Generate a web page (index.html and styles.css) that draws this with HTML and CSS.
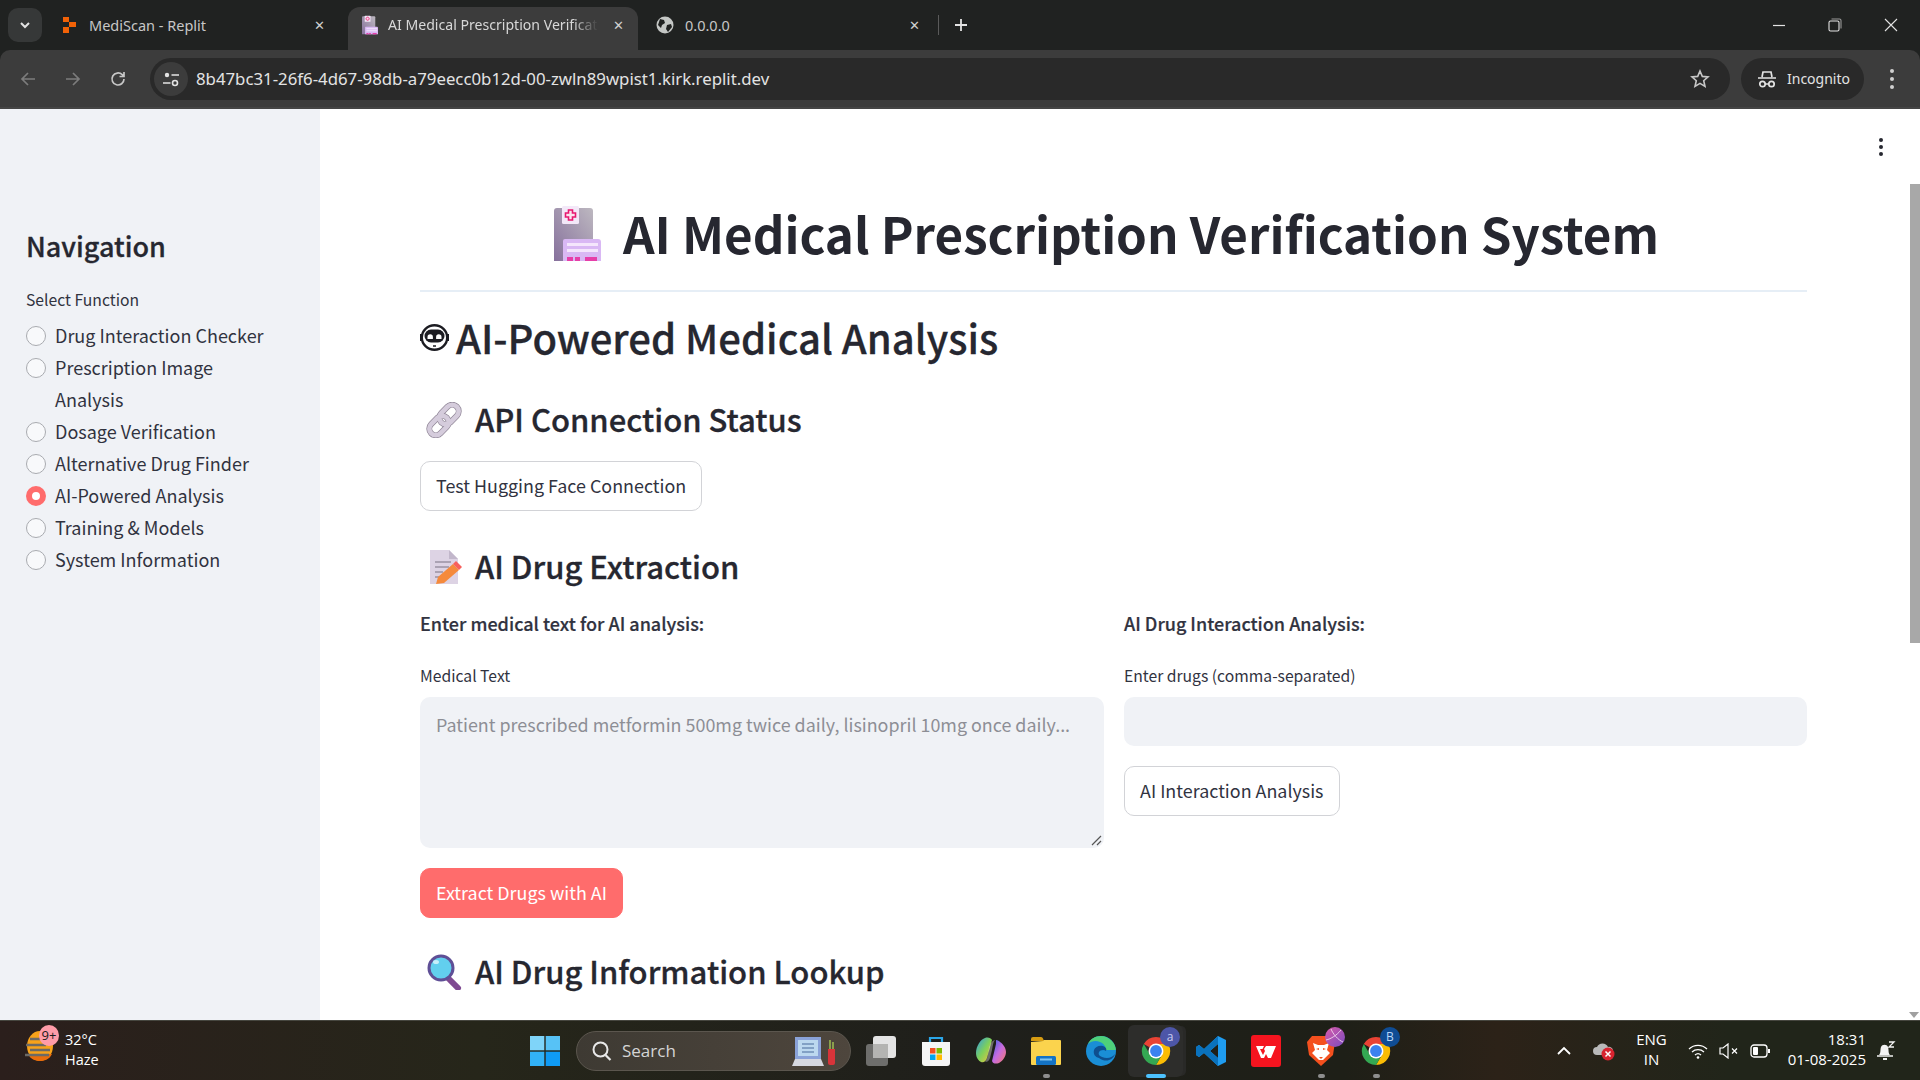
FILE: index.html
```html
<!DOCTYPE html>
<html lang="en">
<head>
    <meta charset="UTF-8">
    <title>AI Medical Prescription Verification System</title>
    <link rel="stylesheet" href="styles.css">
</head>
<body>

    <svg class="defs" width="0" height="0">
        <defs>
            <linearGradient id="building" x1="0" y1="1" x2="1" y2="0">
                <stop offset="0" stop-color="#86709c"/>
                <stop offset="1" stop-color="#bdb8c0"/>
            </linearGradient>
            <linearGradient id="copilot-left" x1="0" y1="0" x2="1" y2="1">
                <stop offset="0" stop-color="#2f9be8"/>
                <stop offset=".5" stop-color="#7ed05a"/>
                <stop offset="1" stop-color="#f8c33c"/>
            </linearGradient>
            <linearGradient id="copilot-right" x1="0" y1="0" x2="1" y2="1">
                <stop offset="0" stop-color="#3d5fe0"/>
                <stop offset=".5" stop-color="#c56be0"/>
                <stop offset="1" stop-color="#f77a6a"/>
            </linearGradient>
        </defs>
        <symbol id="chrome-logo" viewBox="0 0 32 32">
            <path d="M16 1a15 15 0 0 1 13 7.500H16a7.500 7.500 0 0 0-6.500 3.750L3 8.500A15 15 0 0 1 16 1z" fill="#ea4335"/>
            <path d="M29 8.500a15 15 0 0 1-13 22.500l6.500-11.250A7.500 7.500 0 0 0 22.500 12L16 8.500z" fill="#fbbc04"/>
            <path d="M3 8.500l6.500 11.250a7.500 7.500 0 0 0 13 0L16 31A15 15 0 0 1 3 8.500z" fill="#34a853"/>
            <circle cx="16" cy="16" r="8" fill="#fff"/>
            <circle cx="16" cy="16" r="6.300" fill="#3b82f0"/>
        </symbol>
        <symbol id="hospital" viewBox="0 0 47 55">
            <path d="M3 2h33a3 3 0 0 1 3 3v50H0V5a3 3 0 0 1 3-3z" fill="url(#building)"/>
            <rect x="8" y="0" width="17" height="18" rx="1.500" fill="#f3e8f8"/>
            <path d="M14.500 4h4v3h3v4h-3v3h-4v-3h-3V7h3z" fill="#fbe3ee" stroke="#e8186f" stroke-width="1.600"/>
            <path d="M11 33h33a3 3 0 0 1 3 3v19H9V35a2 2 0 0 1 2-2z" fill="#d9b8f4"/>
            <rect x="13" y="37" width="31" height="3" fill="#f4e6fc"/>
            <rect x="13" y="43" width="31" height="3" fill="#f4e6fc"/>
            <rect x="13" y="51" width="6" height="4" fill="#e63fa8"/>
            <rect x="21" y="51" width="5" height="4" fill="#e63fa8"/>
            <rect x="31" y="51" width="12" height="4" fill="#e63fa8"/>
        </symbol>
    </svg>

    <div class="tabstrip">
        <button class="tab-menu">
            <svg width="14" height="14" viewBox="0 0 14 14"><path d="M3 5l4 4 4-4" fill="none" stroke="#e3e3e3" stroke-width="2"/></svg>
        </button>
        <div class="tab">
            <svg class="favicon" width="16" height="18" viewBox="0 0 16 18"><path d="M1 1h6v5H1zM7 6h7v5H7zM1 11h6v6H1z" fill="#f26207"/></svg>
            <span class="tab-title">MediScan - Replit</span>
            <span class="tab-close">&#10005;</span>
        </div>
        <div class="tab tab-active">
            <svg class="favicon" width="16" height="20"><use href="#hospital"/></svg>
            <span class="tab-title">AI Medical Prescription Verificat</span>
            <span class="tab-close">&#10005;</span>
        </div>
        <div class="tab">
            <svg class="favicon" width="18" height="18" viewBox="0 0 18 18"><circle cx="9" cy="9" r="8.500" fill="#c4c7c5"/><path d="M4 3l4 1 1 3-3 2-1 3-3-3zM11 9l4-1 1 3-4 5-2-3z" fill="#202221"/></svg>
            <span class="tab-title">0.0.0.0</span>
            <span class="tab-close">&#10005;</span>
        </div>
        <span class="tab-divider"></span>
        <svg class="new-tab" width="14" height="14" viewBox="0 0 14 14"><path d="M7 1v12M1 7h12" stroke="#e3e3e3" stroke-width="1.800"/></svg>
        <div class="window-buttons">
            <svg width="14" height="14" viewBox="0 0 14 14"><path d="M1 7.500h12" stroke="#e3e3e3" stroke-width="1.200"/></svg>
            <svg width="14" height="14" viewBox="0 0 14 14"><rect x="1" y="3" width="10" height="10" rx="1.500" fill="none" stroke="#e3e3e3" stroke-width="1.100"/><path d="M3.500 1h8a1.500 1.500 0 0 1 1.500 1.500v8" fill="none" stroke="#999" stroke-width="1.100"/></svg>
            <svg width="14" height="14" viewBox="0 0 14 14"><path d="M1 1l12 12M13 1L1 13" stroke="#e3e3e3" stroke-width="1.100"/></svg>
        </div>
    </div>

    <div class="toolbar">
        <svg class="nav-icon" width="18" height="18" viewBox="0 0 18 18"><path d="M16 9H3M9 3L3 9l6 6" fill="none" stroke="#7c7c7c" stroke-width="1.700"/></svg>
        <svg class="nav-icon" width="18" height="18" viewBox="0 0 18 18"><path d="M2 9h13M9 3l6 6-6 6" fill="none" stroke="#7c7c7c" stroke-width="1.700"/></svg>
        <svg class="nav-icon" width="18" height="18" viewBox="0 0 18 18"><path d="M15 9a6 6 0 1 1-1.800-4.300L15 6.500M15 2v4.500h-4.500" fill="none" stroke="#c7c7c7" stroke-width="1.700"/></svg>
        <div class="omnibox">
            <span class="site-info">
                <svg width="18" height="18" viewBox="0 0 18 18"><circle cx="5" cy="5" r="2.200" fill="#e3e3e3"/><path d="M9.500 5H17M1 13h7.500" stroke="#e3e3e3" stroke-width="1.600"/><circle cx="13" cy="13" r="2.500" fill="none" stroke="#e3e3e3" stroke-width="1.600"/></svg>
            </span>
            <span class="url">8b47bc31-26f6-4d67-98db-a79eecc0b12d-00-zwln89wpist1.kirk.replit.dev</span>
            <svg class="star" width="20" height="20" viewBox="0 0 20 20"><path d="M10 2l2.300 5.400 5.700.5-4.300 3.800 1.300 5.700L10 14.400 5 17.400l1.300-5.700L2 7.900l5.700-.5z" fill="none" stroke="#c7c7c7" stroke-width="1.600"/></svg>
        </div>
        <div class="incognito">
            <svg width="20" height="20" viewBox="0 0 20 20"><path d="M5 8l1-5h8l1 5M1 9h18" fill="none" stroke="#e3e3e3" stroke-width="1.700"/><circle cx="5.500" cy="15" r="2.700" fill="none" stroke="#e3e3e3" stroke-width="1.700"/><circle cx="14.500" cy="15" r="2.700" fill="none" stroke="#e3e3e3" stroke-width="1.700"/><path d="M8 15h4" stroke="#e3e3e3" stroke-width="1.500"/></svg>
            <span>Incognito</span>
        </div>
        <div class="chrome-menu"><i></i><i></i><i></i></div>
    </div>

    <div class="viewport">
        <aside class="sidebar">
            <h2 class="side-title">Navigation</h2>
            <div class="field-label">Select Function</div>
            <ul class="radio-list">
                <li><span class="radio"></span>Drug Interaction Checker</li>
                <li><span class="radio"></span>Prescription Image<br>Analysis</li>
                <li><span class="radio"></span>Dosage Verification</li>
                <li><span class="radio"></span>Alternative Drug Finder</li>
                <li class="selected"><span class="radio"></span>AI-Powered Analysis</li>
                <li><span class="radio"></span>Training &amp; Models</li>
                <li><span class="radio"></span>System Information</li>
            </ul>
        </aside>

        <main class="main">
            <div class="app-menu"><i></i><i></i><i></i></div>

            <h1 class="page-title">
                <svg class="title-icon" width="47" height="55"><use href="#hospital"/></svg>
                AI Medical Prescription Verification System
            </h1>
            <hr class="title-rule">

            <h2 class="section-title">
                <svg class="robot-icon" width="31" height="27" viewBox="0 0 31 27">
                    <path d="M1 10h2v7H1zM28 10h2v7h-2z" fill="#1c1c22"/>
                    <ellipse cx="15.500" cy="13.500" rx="12.700" ry="12.200" fill="#fff" stroke="#1c1c22" stroke-width="2.400"/>
                    <rect x="5.500" y="5.500" width="20" height="13" rx="6.500" fill="#1c1c22"/>
                    <path d="M8.500 15v-2a2.700 2.700 0 0 1 5.400 0v2zM17.100 15v-2a2.700 2.700 0 0 1 5.400 0v2z" fill="#fff"/>
                    <path d="M14 22h3" stroke="#1c1c22" stroke-width="1.500"/>
                </svg>
                AI-Powered Medical Analysis
            </h2>

            <h3 class="block-title">
                <svg class="block-icon" width="36" height="36" viewBox="0 0 36 36">
                    <g fill="none" stroke="#8f8596" stroke-width="6">
                        <rect x="12" y="6" width="22" height="13" rx="6.500" transform="rotate(-45 23 12.500)"/>
                        <rect x="2" y="17" width="22" height="13" rx="6.500" transform="rotate(-45 13 23.500)"/>
                    </g>
                    <g fill="none" stroke="#d5ccdc" stroke-width="4.600">
                        <rect x="12" y="6" width="22" height="13" rx="6.500" transform="rotate(-45 23 12.500)"/>
                        <rect x="2" y="17" width="22" height="13" rx="6.500" transform="rotate(-45 13 23.500)"/>
                    </g>
                </svg>
                API Connection Status
            </h3>
            <button class="btn btn-test">Test Hugging Face Connection</button>

            <h3 class="block-title block-extract">
                <svg class="block-icon" width="36" height="36" viewBox="0 0 36 36">
                    <path d="M4 1h19l9 9v25H4z" fill="#ddd3e4"/>
                    <path d="M23 1l9 9h-9z" fill="#c2b7cb"/>
                    <path d="M9 13h16M9 18h14M9 23h8M9 28h5" stroke="#9b93a2" stroke-width="1.500"/>
                    <path d="M10 35l2-7 15-13 6 6-15 13z" fill="#f58a3c"/>
                    <path d="M27 15l3-3 6 6-3 3z" fill="#f8605c"/>
                </svg>
                AI Drug Extraction
            </h3>

            <div class="columns">
                <div class="column">
                    <p class="column-head">Enter medical text for AI analysis:</p>
                    <div class="field-label">Medical Text</div>
                    <div class="textarea">
                        Patient prescribed metformin 500mg twice daily, lisinopril 10mg once daily...
                        <svg class="resize-grip" width="11" height="11" viewBox="0 0 11 11"><path d="M1 10l9-9M6 10l4-4" stroke="#555" stroke-width="1.200"/></svg>
                    </div>
                    <button class="btn btn-primary">Extract Drugs with AI</button>
                </div>
                <div class="column">
                    <p class="column-head">AI Drug Interaction Analysis:</p>
                    <div class="field-label">Enter drugs (comma-separated)</div>
                    <div class="text-input"></div>
                    <button class="btn btn-interaction">AI Interaction Analysis</button>
                </div>
            </div>

            <h3 class="block-title block-lookup">
                <svg class="block-icon" width="36" height="36" viewBox="0 0 36 36">
                    <path d="M22 24l10 10" stroke="#7f4a92" stroke-width="6" stroke-linecap="round"/>
                    <circle cx="15" cy="14" r="12" fill="#62cfee" stroke="#5f4f96" stroke-width="3"/>
                    <ellipse cx="10" cy="8" rx="3" ry="2" fill="#c6eefa"/>
                </svg>
                AI Drug Information Lookup
            </h3>
        </main>

        <div class="scrollbar">
            <div class="scroll-thumb"></div>
            <div class="scroll-arrow"></div>
        </div>
    </div>

    <footer class="taskbar">
        <div class="weather">
            <svg class="weather-icon" width="30" height="32" viewBox="0 0 30 32">
                <ellipse cx="15" cy="16" rx="13" ry="15" fill="#f7a21a"/>
                <path d="M3 24c3 6 8 7 12 7s9-1 12-7z" fill="#e96c0c"/>
                <path d="M5 9h14M1 15h20M5 20h20M0 25h24" stroke="#6c6a66" stroke-width="2.500"/>
            </svg>
            <span class="weather-badge">9+</span>
            <div class="weather-text">
                <span>32°C</span>
                <span>Haze</span>
            </div>
        </div>

        <div class="task-center">
            <div class="task-item">
                <svg width="30" height="30" viewBox="0 0 30 30">
                    <rect x="0" y="0" width="14.300" height="14.300" fill="#7fd4f9"/>
                    <rect x="15.700" y="0" width="14.300" height="14.300" fill="#57c2f6"/>
                    <rect x="0" y="15.700" width="14.300" height="14.300" fill="#32b2f7"/>
                    <rect x="15.700" y="15.700" width="14.300" height="14.300" fill="#0f9bf5"/>
                </svg>
            </div>
            <div class="search-pill">
                <svg width="22" height="22" viewBox="0 0 22 22"><circle cx="9.500" cy="9.500" r="7" fill="none" stroke="#e8e8e8" stroke-width="2"/><path d="M14.500 15l5 5" stroke="#e8e8e8" stroke-width="2.200"/></svg>
                <span class="search-text">Search</span>
                <svg class="search-art" width="44" height="32" viewBox="0 0 44 32">
                    <rect x="3" y="2" width="26" height="22" fill="#8aa2d8"/>
                    <rect x="6" y="5" width="20" height="16" fill="#bcd8ef"/>
                    <path d="M10 9h12M10 13h12M10 17h12" stroke="#6f8fb8" stroke-width="1.500"/>
                    <path d="M3 24h26l3 7H0z" fill="#d6d8e0"/>
                    <path d="M36 14h7v14a2 2 0 0 1-2 2h-3a2 2 0 0 1-2-2z" fill="#d8343a"/>
                    <path d="M38 14V5M41 14V7" stroke="#8aa04c" stroke-width="2"/>
                </svg>
            </div>
            <div class="task-item">
                <svg width="30" height="30" viewBox="0 0 30 30">
                    <rect x="7" y="0" width="23" height="22" rx="3" fill="#e4e4e4"/>
                    <rect x="0" y="8" width="22" height="22" rx="3" fill="#6e6e6c"/>
                    <rect x="7" y="8" width="15" height="14" fill="#b4b4b2"/>
                </svg>
            </div>
            <div class="task-item">
                <svg width="30" height="32" viewBox="0 0 30 32">
                    <path d="M9 8V3h12v5" fill="none" stroke="#2ba6e8" stroke-width="2.200"/>
                    <path d="M1 7h28v21a3 3 0 0 1-3 3H4a3 3 0 0 1-3-3z" fill="#f5f5f5"/>
                    <rect x="9" y="13" width="5.500" height="5.500" fill="#f25022"/>
                    <rect x="15.500" y="13" width="5.500" height="5.500" fill="#7fba00"/>
                    <rect x="9" y="19.500" width="5.500" height="5.500" fill="#00a4ef"/>
                    <rect x="15.500" y="19.500" width="5.500" height="5.500" fill="#ffb900"/>
                </svg>
            </div>
            <div class="task-item">
                <svg width="30" height="28" viewBox="0 0 30 28">
                    <path d="M9 1c3-1 6 0 7 2l-5 18c-1 3-3 5-6 4-2-1-5-4-5-9C0 9 5 2 9 1z" fill="url(#copilot-left)"/>
                    <path d="M20 3c2 0 3 1 4 2 3 2 6 6 6 10s-3 9-7 11c-3 1-6 1-7-2l4-17c0-2 0-4 0-4z" fill="url(#copilot-right)"/>
                    <path d="M13 11c1-3 2-7 6-8-2 2-2 5-3 10l-2 8c-1 3-3 4-5 4 2-2 3-6 4-14z" fill="#fff" opacity=".35"/>
                </svg>
            </div>
            <div class="task-item has-dot">
                <svg width="30" height="30" viewBox="0 0 30 30">
                    <path d="M0 3a2 2 0 0 1 2-2h8a2 2 0 0 1 2 1.500L13 5H0z" fill="#d69c12"/>
                    <path d="M0 6l12-1 1-1h16a1 1 0 0 1 1 1v23a1 1 0 0 1-1 1H1a1 1 0 0 1-1-1z" fill="#fbd34d"/>
                    <rect x="5" y="20" width="20" height="9" rx="1.500" fill="#1473c5"/>
                    <rect x="9" y="22.500" width="12" height="2" fill="#7fc4f0"/>
                </svg>
            </div>
            <div class="task-item">
                <svg width="30" height="30" viewBox="0 0 30 30">
                    <circle cx="15" cy="15" r="15" fill="#1a8ed6"/>
                    <path d="M30 15c0-8-7-15-15-15C9 0 4 3 2 8c3-3 8-4 12-2 5 2 6 6 6 8h10z" fill="#4ed07a"/>
                    <path d="M13 22c-4-1-6-4-5-8 1-3 5-5 9-4 3 1 4 3 3 5-2-2-6-1-7 1s0 4 3 5c5 2 10 1 13-3-2 6-9 9-16 4z" fill="#0e4f8f"/>
                </svg>
            </div>
            <div class="task-item active-item">
                <svg width="30" height="30"><use href="#chrome-logo"/></svg>
                <span class="app-badge badge-a">a</span>
            </div>
            <div class="task-item">
                <svg width="30" height="32" viewBox="0 0 30 32">
                    <path d="M22 1l8 4v22l-8 4-14-13-5 4-3-2v-8l3-2 5 4zM22 9l-8 7 8 7z" fill="#1f9cf0"/>
                    <path d="M22 1L8 14 3 10l-3 2v8l3 2 5-4 14 13 0-8-8-7 8-7z" fill="#0a72bd"/>
                </svg>
            </div>
            <div class="task-item">
                <svg width="30" height="32" viewBox="0 0 30 32">
                    <rect width="30" height="32" rx="3" fill="#f5141f"/>
                    <path d="M5 11h8l-1.500 3H9l3 6 2-4-1-2 2-3h10l-5 12h-3l-2-4-2 4H10z" fill="#fff"/>
                </svg>
            </div>
            <div class="task-item has-dot">
                <svg width="30" height="33" viewBox="0 0 30 33">
                    <path d="M6 2h18l5 6-2 13-12 11L3 21 1 8z" fill="#f4501e"/>
                    <path d="M7 9l5 2h6l5-2-2 7 3 3-7 7h-4l-7-7 3-3zM10 15l3 1v-2zM20 15l-3 1v-2z" fill="#fff" fill-rule="evenodd"/>
                    <path d="M13 23h4l-2 2z" fill="#f4501e"/>
                </svg>
                <svg class="app-badge badge-brave" width="20" height="20" viewBox="0 0 20 20">
                    <path d="M1 13c5-1 11-5 15-10M6 2c2 5 7 11 12 13" fill="none" stroke="#f2d6ee" stroke-width=".9"/>
                </svg>
            </div>
            <div class="task-item has-dot">
                <svg width="30" height="30"><use href="#chrome-logo"/></svg>
                <span class="app-badge badge-b">B</span>
            </div>
        </div>

        <div class="tray">
            <svg class="tray-chevron" width="16" height="10" viewBox="0 0 16 10"><path d="M2 8l6-6 6 6" fill="none" stroke="#fff" stroke-width="1.800"/></svg>
            <svg class="tray-cloud" width="22" height="20" viewBox="0 0 22 20">
                <path d="M4 14a4 4 0 0 1 0-8 6 6 0 0 1 11 0 4 4 0 0 1 2 8z" fill="#b9b9b9"/>
                <circle cx="15" cy="13" r="6.500" fill="#d8232f"/>
                <path d="M12.500 10.500l5 5M17.500 10.500l-5 5" stroke="#fff" stroke-width="1.500"/>
            </svg>
            <div class="tray-lang"><span>ENG</span><span>IN</span></div>
            <svg width="20" height="16" viewBox="0 0 20 16"><path d="M1 6a13 13 0 0 1 18 0M4 9a9 9 0 0 1 12 0M7 12a4.500 4.500 0 0 1 6 0" fill="none" stroke="#fff" stroke-width="1.300"/><circle cx="10" cy="14.500" r="1.300" fill="#fff"/></svg>
            <svg width="20" height="16" viewBox="0 0 20 16"><path d="M1 5h3l5-4v14l-5-4H1z" fill="none" stroke="#fff" stroke-width="1.200"/><path d="M13 5.500l5 5M18 5.500l-5 5" stroke="#fff" stroke-width="1.200"/></svg>
            <svg width="21" height="14" viewBox="0 0 21 14"><rect x="1" y="1" width="16" height="12" rx="3" fill="none" stroke="#fff" stroke-width="1.300"/><rect x="3" y="3" width="5" height="8" rx="1" fill="#fff"/><path d="M19 5v4" stroke="#fff" stroke-width="2"/></svg>
            <div class="tray-clock"><span>18:31</span><span>01-08-2025</span></div>
            <svg width="20" height="22" viewBox="0 0 20 22"><path d="M3 15c2-2 1-5 2-8s6-3 7 0 0 6 2 8z" fill="#f2f2f2"/><path d="M1 16h16" stroke="#f2f2f2" stroke-width="1.500"/><path d="M7 19h4" stroke="#f2f2f2" stroke-width="2"/><path d="M13 2h5l-5 5h5" fill="none" stroke="#f2f2f2" stroke-width="1.300"/></svg>
        </div>
    </footer>

</body>
</html>
```

FILE: styles.css
```css
* {
    box-sizing: border-box;
}

body {
    margin: 0;
    width: 1920px;
    height: 1080px;
    overflow: hidden;
    display: flex;
    flex-direction: column;
    font-family: "Noto Sans CJK JP", "Noto Sans", sans-serif;
    color: #262730;
    background: #202221;
}

.defs {
    display: block;
    height: 0;
}

/* browser tabs */
.tabstrip {
    height: 50px;
    flex: none;
    display: flex;
    align-items: flex-end;
    background: #202221;
    font-family: "Noto Sans", sans-serif;
    font-size: 14.500px;
    color: #c7c7c7;
}

.tab-menu {
    width: 34px;
    height: 34px;
    margin: 0 0 8px 8px;
    border: none;
    border-radius: 10px;
    background: #363838;
    display: flex;
    align-items: center;
    justify-content: center;
    padding: 0;
}

.tab {
    width: 290px;
    height: 43px;
    display: flex;
    align-items: center;
    padding: 0 8px 8px 18px;
    flex: none;
}

.tab:nth-of-type(1) {
    width: 306px;
    padding-left: 20px;
    padding-right: 23px;
}

.tab-active {
    background: #3c3c3c;
    border-radius: 12px 12px 0 0;
    color: #d8d8d8;
    padding: 0 14px 8px 14px;
}

.tab-active .tab-title {
    flex: none;
    font-size: 14.100px;
    -webkit-mask-image: linear-gradient(90deg, #000 88%, transparent 100%);
    mask-image: linear-gradient(90deg, #000 88%, transparent 100%);
}

.favicon {
    margin-right: 11px;
    flex: none;
}

.tab-active .favicon {
    margin-right: 10px;
}

.tab-title {
    flex: 1;
    white-space: nowrap;
}

.tab-close {
    margin-left: auto;
    font-size: 13px;
    color: #d0d0d0;
}

.tab-divider {
    width: 1px;
    height: 20px;
    background: #5a5a5a;
    margin: 0 0 15px 10px;
}

.new-tab {
    margin: 0 0 18px 15px;
}

.window-buttons {
    margin-left: auto;
    display: flex;
    gap: 42px;
    padding: 0 22px 18px 0;
}

/* address bar */
.toolbar {
    height: 59px;
    flex: none;
    display: flex;
    align-items: center;
    padding: 0 12px 0 19px;
    background: #3c3c3c;
    border-radius: 10px 10px 0 0;
    border-bottom: 2px solid #454545;
}

.nav-icon {
    margin-right: 27px;
    flex: none;
}

.nav-icon:nth-of-type(3) {
    margin-right: 23px;
}

.omnibox {
    width: 1580px;
    height: 42px;
    display: flex;
    align-items: center;
    border-radius: 21px;
    background: #292929;
    padding: 0 20px 0 4px;
}

.site-info {
    width: 34px;
    height: 34px;
    border-radius: 50%;
    background: #3c3c3c;
    display: flex;
    align-items: center;
    justify-content: center;
    margin-right: 8px;
}

.url {
    flex: 1;
    font-family: "Noto Sans", sans-serif;
    font-size: 16.800px;
    color: #e3e3e3;
}

.incognito {
    width: 123px;
    height: 42px;
    margin-left: 11px;
    border-radius: 21px;
    background: #292929;
    display: flex;
    align-items: center;
    gap: 10px;
    padding-left: 16px;
    font-family: "Noto Sans", sans-serif;
    font-size: 14px;
    color: #e3e3e3;
}

.chrome-menu {
    margin-left: 26px;
    display: flex;
    flex-direction: column;
    gap: 4px;
}

.chrome-menu i {
    width: 4px;
    height: 4px;
    border-radius: 50%;
    background: #d0d0d0;
}

/* page */
.viewport {
    height: 911px;
    flex: none;
    display: flex;
    overflow: hidden;
    background: #fff;
}

.sidebar {
    width: 320px;
    flex: none;
    background: #f0f2f6;
    padding: 114px 26px 0;
}

.side-title {
    margin: 0 0 18px;
    font-size: 27px;
    line-height: 46px;
    font-weight: 500;
    -webkit-text-stroke: 0.3px #262730;
}

.field-label {
    font-size: 15.700px;
    line-height: 26px;
    color: #31333f;
}

.radio-list {
    list-style: none;
    margin: 6px 0 0;
    padding: 0;
    font-size: 18px;
    line-height: 32px;
    color: #31333f;
}

.radio-list li {
    display: flex;
}

.radio {
    width: 20px;
    height: 20px;
    margin: 7px 9px 0 0;
    flex: none;
    border-radius: 50%;
    background: #f8f9fb;
    border: 1.500px solid #a9abb0;
}

.selected .radio {
    background: #fff;
    border: 6px solid #ff6c6c;
}

.main {
    flex: 1;
    position: relative;
    padding: 0 98px 0 100px;
    overflow: hidden;
}

.app-menu {
    position: absolute;
    top: 29px;
    right: 22px;
    display: flex;
    flex-direction: column;
    gap: 3px;
}

.app-menu i {
    width: 4px;
    height: 4px;
    border-radius: 50%;
    background: #262730;
}

.page-title {
    margin: 0;
    padding: 88px 14px 0 0;
    font-size: 49.300px;
    line-height: 72px;
    font-weight: 700;
    display: flex;
    justify-content: center;
    align-items: center;
    gap: 22px;
}

.title-rule {
    margin: 21px 0 0;
    border: none;
    height: 2px;
    background: #e6eef6;
}

.section-title {
    margin: 15px 0 0;
    font-size: 40px;
    line-height: 60px;
    font-weight: 500;
    -webkit-text-stroke: 0.3px #262730;
    display: flex;
    align-items: center;
    gap: 6px;
}

.robot-icon {
    margin-left: -1px;
}

.block-title {
    margin: 29px 0 0;
    padding: 0 0 2px 6px;
    font-size: 31px;
    line-height: 46px;
    font-weight: 500;
    -webkit-text-stroke: 0.3px #262730;
    display: flex;
    align-items: center;
    gap: 13px;
}

.block-icon {
    margin-top: 2px;
}

.btn {
    height: 50px;
    display: block;
    padding: 0 15px 2px;
    border: 1px solid #d2d3d7;
    border-radius: 10px;
    background: #fff;
    color: #31333f;
    font-family: inherit;
    font-size: 17.900px;
}

.btn-test {
    margin-top: 17px;
}

.block-extract {
    margin-top: 32px;
}

.columns {
    display: grid;
    grid-template-columns: 684px 683px;
    gap: 20px;
    margin-top: 16px;
}

.column-head {
    margin: 0 0 24px;
    font-size: 18px;
    line-height: 32px;
    font-weight: 500;
    -webkit-text-stroke: 0.2px #31333f;
    color: #31333f;
}

.textarea {
    position: relative;
    height: 151px;
    margin-top: 8px;
    padding: 11px 16px;
    background: #f0f2f6;
    border-radius: 10px;
    font-size: 17.900px;
    line-height: 32px;
    color: #8d8e95;
}

.resize-grip {
    position: absolute;
    right: 2px;
    bottom: 2px;
}

.btn-primary {
    margin-top: 20px;
    background: #ff6c6c;
    border-color: #ff6c6c;
    color: #fff;
}

.text-input {
    height: 49px;
    margin-top: 8px;
    background: #f0f2f6;
    border-radius: 10px;
}

.btn-interaction {
    margin-top: 20px;
}

.block-lookup {
    margin-top: 30px;
}

/* page scrollbar */
.scrollbar {
    width: 15px;
    flex: none;
    padding: 75px 0 0 5px;
    display: flex;
    flex-direction: column;
    justify-content: space-between;
    background: #fff;
}

.scroll-thumb {
    height: 459px;
    background: #a8a8a8;
}

.scroll-arrow {
    width: 0;
    height: 0;
    margin: 0 0 2px -1px;
    border-left: 5px solid transparent;
    border-right: 5px solid transparent;
    border-top: 6px solid #a0a0a0;
}

/* windows taskbar */
.taskbar {
    height: 60px;
    flex: none;
    display: flex;
    align-items: center;
    position: relative;
    padding-left: 25px;
    border-top: 1px solid #46463f;
    background: linear-gradient(90deg, #2b1f1c 0, #26261a 25%, #1f1f1b 50%, #1e1f17 70%, #2c2218 78%, #21251a 90%, #21251a 100%);
    color: #fff;
    font-family: "Open Sans", sans-serif;
    font-size: 14.500px;
}

.weather {
    width: 492px;
    display: flex;
    position: relative;
    flex: none;
}

.weather-badge {
    position: absolute;
    left: 14px;
    top: -5px;
    width: 20px;
    height: 21px;
    border-radius: 50%;
    background: #ff9ca8;
    color: #1b1b1b;
    font-size: 13px;
    line-height: 21px;
    text-align: center;
}

.weather-text {
    margin-left: 10px;
    padding-bottom: 2px;
    display: flex;
    flex-direction: column;
    line-height: 20px;
}

.task-center {
    display: flex;
    align-items: center;
}

.task-item {
    width: 55px;
    height: 52px;
    position: relative;
    display: flex;
    align-items: center;
    justify-content: center;
    flex: none;
}

.has-dot::after,
.active-item::after {
    content: "";
    position: absolute;
    bottom: -1px;
    left: 50%;
    width: 7px;
    height: 4px;
    margin-left: -3px;
    border-radius: 2px;
    background: #8e8e8e;
}

.active-item {
    background: #2d2d2b;
    border-radius: 6px;
    box-shadow: 4px 0 0 -1px #292927;
}

.active-item::after {
    width: 20px;
    margin-left: -10px;
    background: #4cc2ff;
}

.search-pill {
    width: 275px;
    height: 40px;
    margin: 0 2px 0 4px;
    padding: 0 14px 0 14px;
    display: flex;
    align-items: center;
    gap: 9px;
    border-radius: 20px;
    background: linear-gradient(90deg, #3e3a33, #4e463d);
    border: 1px solid #5b564e;
    font-size: 17px;
    color: #d5d5d5;
}

.search-art {
    margin-left: auto;
}

.search-text {
    flex: 1;
}

.app-badge {
    position: absolute;
    top: 2px;
    right: 3px;
    width: 20px;
    height: 20px;
    border-radius: 50%;
    display: flex;
    align-items: center;
    justify-content: center;
    font-size: 12px;
}

.badge-a {
    background: #4d56a8;
    color: #c9cdf0;
}

.badge-brave {
    background: linear-gradient(135deg, #d85aa8, #7a4cc0);
}

.badge-b {
    background: #0f4c94;
    color: #b9d8f8;
}

.tray {
    margin-left: auto;
    padding-right: 24px;
    display: flex;
    align-items: center;
    font-size: 15px;
}

.tray-chevron {
    margin: 0 10px 0 2px;
}

.tray-cloud {
    margin-right: 21px;
}

.tray-lang {
    display: flex;
    flex-direction: column;
    align-items: center;
    line-height: 20px;
    margin-right: 21px;
    padding-bottom: 3px;
}

.tray svg + svg {
    margin-left: 11px;
}

.tray-clock {
    display: flex;
    flex-direction: column;
    align-items: flex-end;
    line-height: 20px;
    margin: 0 10px 0 17px;
    padding-bottom: 3px;
}
```
